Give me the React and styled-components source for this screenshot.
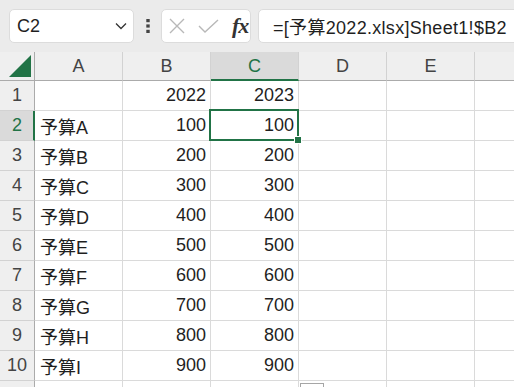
import React from 'react'
import styled, { createGlobalStyle } from 'styled-components'

const color = {
	toolbar: '#ebebeb',
	header: '#efefef',
	headerSel: '#dadada',
	headerLine: '#d2d2d2',
	headerEdge: '#ababab',
	grid: '#dadada',
	green: '#217346',
	text: '#1f1f1f',
	muted: '#444444',
}

const GlobalStyle = createGlobalStyle`
	html, body {
		margin: 0;
		padding: 0;
		background: white;
		overflow: hidden;
	}
`

const Page = styled.div`
	position: relative;
	width: 514px;
	height: 387px;
	overflow: hidden;
	font-family: "Liberation Sans", "Noto Sans CJK JP", sans-serif;
	color: ${color.text};
`

/*=================================================
					Formula toolbar
=================================================*/

const Toolbar = styled.div`
	display: flex;
	align-items: center;
	height: 52px;
	padding-left: 9px;
	background: ${color.toolbar};
	box-sizing: border-box;
	white-space: nowrap;
`

const Box = styled.div`
	flex: none;
	display: flex;
	align-items: center;
	height: 34px;
	box-sizing: border-box;
	background: white;
	border: 1px solid #dcdcdc;
	border-radius: 5px;
`

const NameBox = styled(Box)`
	width: 125px;
	justify-content: space-between;
	padding: 0 6px 0 7px;
	font-size: 18px;
`

const Kebab = styled.div`
	flex: none;
	display: flex;
	margin-left: 12px;
	margin-right: 11px;
`

const IconBox = styled(Box)`
	width: 90px;
	padding-left: 7px;
	gap: 13px;
`

const Fx = styled.span`
	font-family: "Liberation Serif", "DejaVu Serif", serif;
	font-style: italic;
	font-weight: bold;
	font-size: 22px;
	color: #333;
	letter-spacing: -1px;
`

const FormulaBar = styled(Box)`
	width: 300px;
	margin-left: 7px;
	padding-left: 14px;
	font-size: 18px;
	letter-spacing: 0.3px;
`

/*=================================================
					Sheet grid
=================================================*/

const Sheet = styled.div`
	display: grid;
	grid-template-columns: 35px repeat(6, 88px);
	grid-template-rows: 29px;
	grid-auto-rows: 30px;
	font-size: 18px;
`

const Cell = styled.div`
	position: relative;
	box-sizing: border-box;
	display: flex;
	align-items: center;
	justify-content: ${p => p.$right ? 'flex-end' : 'flex-start'};
	padding: 0 4px 0 5px;
	border-right: 1px solid ${color.grid};
	border-bottom: 1px solid ${color.grid};
	white-space: nowrap;

	${p => p.$active && `
		&::after {
			content: '';
			position: absolute;
			top: -2px;
			left: -2px;
			right: -1px;
			bottom: -1px;
			border: 2px solid ${color.green};
		}
		&::before {
			content: '';
			position: absolute;
			right: -4px;
			bottom: -4px;
			width: 6px;
			height: 6px;
			background: ${color.green};
			border: 1px solid white;
			z-index: 1;
		}
	`}
`

const Corner = styled.div`
	display: flex;
	align-items: flex-end;
	justify-content: flex-end;
	padding: 0 3px 3px 0;
	box-sizing: border-box;
	background: ${color.header};
	border-right: 1px solid ${color.headerEdge};
	border-bottom: 1px solid ${color.headerEdge};
`

const ColHead = styled.div`
	box-sizing: border-box;
	display: flex;
	align-items: center;
	justify-content: center;
	background: ${p => p.$sel ? color.headerSel : color.header};
	color: ${p => p.$sel ? color.green : color.muted};
	border-right: 1px solid ${color.headerLine};
	border-bottom: ${p => p.$sel ? `2px solid ${color.green}` : `1px solid ${color.headerEdge}`};
	font-size: 18px;
	padding-top: 1px;
`

const RowHead = styled.div`
	box-sizing: border-box;
	display: flex;
	align-items: center;
	justify-content: center;
	background: ${p => p.$sel ? color.headerSel : color.header};
	color: ${p => p.$sel ? color.green : color.muted};
	border-bottom: 1px solid ${color.headerLine};
	border-right: ${p => p.$sel ? `2px solid ${color.green}` : `1px solid ${color.headerEdge}`};
	font-size: 18px;
	padding-left: ${p => p.$sel ? '1px' : '0'};
`

const PasteButton = styled.div`
	position: absolute;
	left: 300px;
	top: 383px;
	width: 24px;
	height: 20px;
	box-sizing: border-box;
	background: white;
	border: 1px solid #a6a6a6;
`

// F is only a sliver at the right edge, so its letter is not shown
const cols = ['A', 'B', 'C', 'D', 'E', '']
const letters = ['A', 'B', 'C', 'D', 'E', 'F', 'G', 'H', 'I']

const rows = [
	['', '2022', '2023', '', '', ''],
	...letters.map((l, i) => ['予算' + l, String((i + 1) * 100), String((i + 1) * 100), '', '', '']),
	['', '', '', '', '', ''],
]

const Chevron = () =>
	<svg width="12" height="8" viewBox="0 0 12 8">
		<path d="M1 1.5 L6 6.5 L11 1.5" fill="none" stroke="#333" strokeWidth="1.3" />
	</svg>

const Dots = () =>
	<svg width="4" height="14" viewBox="0 0 4 14">
		<rect x="0.3" y="0" width="3.4" height="3.2" fill="#444" />
		<rect x="0.3" y="5.4" width="3.4" height="3.2" fill="#444" />
		<rect x="0.3" y="10.8" width="3.4" height="3.2" fill="#444" />
	</svg>

const Cross = () =>
	<svg width="16" height="16" viewBox="0 0 16 16">
		<path d="M1 1 L15 15 M15 1 L1 15" stroke="#b8b8b8" strokeWidth="1.4" fill="none" />
	</svg>

const Check = () =>
	<svg width="21" height="14" viewBox="0 0 21 14">
		<path d="M1 7 L7 13 L20 1" stroke="#b8b8b8" strokeWidth="1.4" fill="none" />
	</svg>

const Triangle = () =>
	<svg width="22" height="22" viewBox="0 0 22 22">
		<path d="M22 0 L22 22 L0 22 Z" fill={color.green} />
	</svg>

export default function App() {
	return <>
		<GlobalStyle />
		<Page>
			<Toolbar>
				<NameBox>C2<Chevron /></NameBox>
				<Kebab><Dots /></Kebab>
				<IconBox>
					<Cross />
					<Check />
					<Fx>fx</Fx>
				</IconBox>
				<FormulaBar>=[予算2022.xlsx]Sheet1!$B2</FormulaBar>
			</Toolbar>
			<Sheet>
				<Corner><Triangle /></Corner>
				{cols.map((c, j) => <ColHead key={j} $sel={c === 'C'}>{c}</ColHead>)}
				{rows.map((r, i) => <React.Fragment key={i}>
					<RowHead $sel={i === 1}>{i < 10 ? i + 1 : ''}</RowHead>
					{r.map((v, j) =>
						<Cell key={j} $right={/^\d+$/.test(v)} $active={i === 1 && j === 2}>{v}</Cell>
					)}
				</React.Fragment>)}
			</Sheet>
			<PasteButton />
		</Page>
	</>
}
